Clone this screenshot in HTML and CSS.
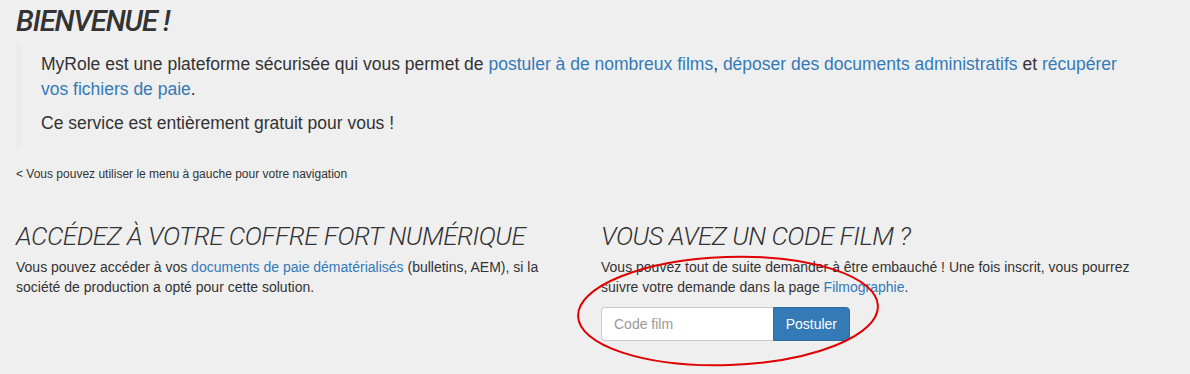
FILE: index.html
```html
<!DOCTYPE html>
<html lang="fr">
<head>
  <meta charset="UTF-8">
  <meta name="viewport" content="width=device-width, initial-scale=1.0">
  <title>MyRole - Bienvenue</title>
  <link rel="stylesheet" href="styles.css">
</head>
<body>
  <div class="page">
    <h1 class="title">BIENVENUE !</h1>
    <blockquote class="intro">
      <p>MyRole est une plateforme sécurisée qui vous permet de <a href="#">postuler à de nombreux films</a>, <a href="#">déposer des documents administratifs</a> et <a href="#">récupérer vos fichiers de paie</a>.</p>
      <p>Ce service est entièrement gratuit pour vous !</p>
    </blockquote>
    <p class="hint">&lt; Vous pouvez utiliser le menu à gauche pour votre navigation</p>

    <div class="columns">
      <section class="col">
        <h2>ACCÉDEZ À VOTRE COFFRE FORT NUMÉRIQUE</h2>
        <p>Vous pouvez accéder à vos <a href="#">documents de paie dématérialisés</a> (bulletins, AEM), si la société de production a opté pour cette solution.</p>
      </section>
      <section class="col">
        <h2>VOUS AVEZ UN CODE FILM ?</h2>
        <p>Vous pouvez tout de suite demander à être embauché ! Une fois inscrit, vous pourrez suivre votre demande dans la page <a href="#">Filmographie</a>.</p>
        <form class="code-form">
          <input type="text" placeholder="Code film">
          <button type="button">Postuler</button>
        </form>
      </section>
    </div>
  </div>

  <svg class="annotation" width="1190" height="374" viewBox="0 0 1190 374">
    <ellipse cx="728" cy="311" rx="150" ry="54" transform="rotate(-2 728 311)" fill="none" stroke="#e00000" stroke-width="2"/>
  </svg>
</body>
</html>
```

FILE: styles.css
```css
body {
  margin: 0;
  background-color: #efefef;
  color: #333;
  font-family: "Liberation Sans", Arial, sans-serif;
  font-size: 14px;
  line-height: 20px;
}

a {
  color: #337ab7;
  text-decoration: none;
}

.page {
  max-width: 1130px;
  padding: 0 16px;
}

.title {
  margin: 0;
  padding-top: 4px;
  font-family: Roboto, sans-serif;
  font-style: italic;
  font-weight: 500;
  font-size: 29px;
  line-height: 34px;
  letter-spacing: -1px;
  color: #333;
}

.intro {
  margin: 4px 0 20px;
  padding: 10px 20px;
  border-left: 5px solid #ebebeb;
  font-size: 17.5px;
  line-height: 25px;
}

.intro p {
  margin: 0 0 9px;
}

.intro p:last-child {
  margin-bottom: 0;
}

.hint {
  margin: 0;
  font-size: 12px;
  line-height: 16px;
}

.columns {
  display: grid;
  grid-template-columns: 555px 555px;
  column-gap: 30px;
  margin-top: 38px;
}

.col h2 {
  margin: 0 0 5px;
  font-family: Roboto, sans-serif;
  font-style: italic;
  font-weight: 300;
  font-size: 26px;
  line-height: 32px;
  letter-spacing: -0.5px;
}

.col p {
  margin: 0 0 10px;
}

.code-form {
  display: flex;
  width: 249px;
}

.code-form input {
  flex: 1;
  min-width: 0;
  height: 34px;
  box-sizing: border-box;
  padding: 6px 12px;
  border: 1px solid #ccc;
  border-right: none;
  border-radius: 4px 0 0 4px;
  background: #fff;
  font-family: inherit;
  font-size: 14px;
  color: #555;
}

.code-form input::placeholder {
  color: #999;
}

.code-form button {
  height: 34px;
  padding: 6px 12px;
  border: 1px solid #2e6da4;
  border-radius: 0 4px 4px 0;
  background-color: #337ab7;
  color: #fff;
  font-family: inherit;
  font-size: 14px;
  cursor: pointer;
}

.annotation {
  position: absolute;
  left: 0;
  top: 0;
  pointer-events: none;
}
```
